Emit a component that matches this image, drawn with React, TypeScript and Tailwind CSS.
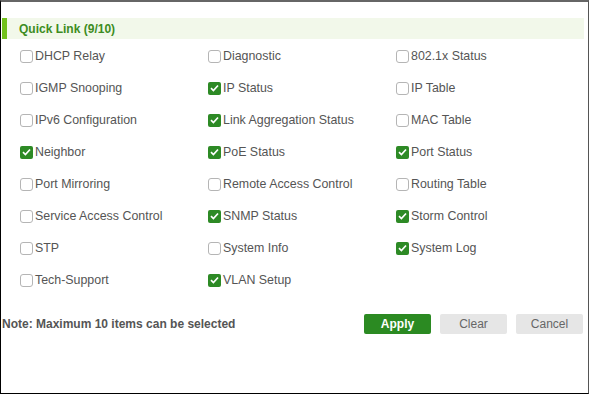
import React, { useState } from 'react'

const items: [string, boolean][] = [
    ['DHCP Relay', false], ['Diagnostic', false], ['802.1x Status', false],
    ['IGMP Snooping', false], ['IP Status', true], ['IP Table', false],
    ['IPv6 Configuration', false], ['Link Aggregation Status', true], ['MAC Table', false],
    ['Neighbor', true], ['PoE Status', true], ['Port Status', true],
    ['Port Mirroring', false], ['Remote Access Control', false], ['Routing Table', false],
    ['Service Access Control', false], ['SNMP Status', true], ['Storm Control', true],
    ['STP', false], ['System Info', false], ['System Log', true],
    ['Tech-Support', false], ['VLAN Setup', true],
]

function Box({ checked }: { checked: boolean }) {
    if (checked) {
        return (
            <span className="w-[13px] h-[13px] rounded-[2px] bg-[#2d8a25] flex items-center justify-center shrink-0">
                <svg width="9" height="8" viewBox="0 0 9 8">
                    <path d="M1 4.2 L3.4 6.5 L8 1.5" stroke="#fff" strokeWidth="1.7" fill="none" />
                </svg>
            </span>
        )
    }
    return <span className="w-[13px] h-[13px] rounded-[3px] border border-[#b5b5b5] bg-white shrink-0" />
}

export default function App() {
    const [checked, setChecked] = useState(items.map(i => i[1]))
    const count = checked.filter(Boolean).length

    return (
        <div className="w-[592px] h-[395px] bg-white" style={{ fontFamily: '"Liberation Sans", Arial, sans-serif' }}>
            <div className="w-[589px] h-[394px] border-l border-r border-b border-t-2 border-l-black border-b-black border-r-[#555] border-t-[#666] flex flex-col">
                {/* Header */}
                <div className="mt-[16px] ml-[1px] w-[582px] h-[21px] bg-[#f2f8ea] flex items-center">
                    <span className="w-[5px] h-full bg-[#72c11c]" />
                    <span className="ml-[12px] text-[12px] font-bold text-[#3d8c22]">Quick Link ({count}/10)</span>
                </div>

                {/* Items */}
                <div className="grid grid-cols-[188px_188px_188px] pl-[19px] pt-[1px]">
                    {items.map(([label], i) => (
                        <label
                            key={label}
                            className="h-8 flex items-center gap-[2px] cursor-pointer"
                            onClick={() => setChecked(c => c.map((v, j) => (j === i ? !v : v)))}
                        >
                            <Box checked={checked[i]} />
                            <span className="text-[12.4px] text-[#555]">{label}</span>
                        </label>
                    ))}
                </div>

                {/* Footer */}
                <div className="mt-[18px] flex items-center pl-[1px] pr-[5px]">
                    <span className="text-[12px] font-bold text-[#555]">Note: Maximum 10 items can be selected</span>
                    <div className="ml-auto flex gap-[9px]">
                        <button className="w-[67px] h-[20px] rounded-[2px] bg-[#2b8a22] text-white text-[12px] font-bold">Apply</button>
                        <button className="w-[67px] h-[20px] rounded-[2px] bg-[#e6e6e6] text-[#666] text-[12px]">Clear</button>
                        <button className="w-[67px] h-[20px] rounded-[2px] bg-[#e6e6e6] text-[#666] text-[12px]">Cancel</button>
                    </div>
                </div>
            </div>
        </div>
    )
}
